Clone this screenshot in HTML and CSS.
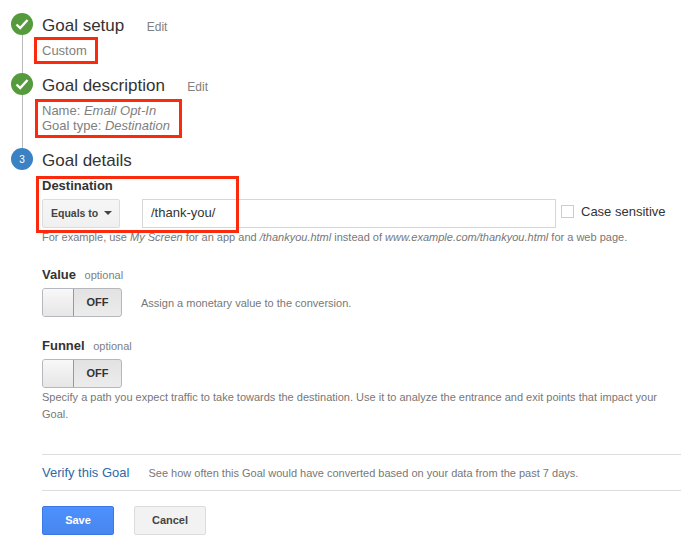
FILE: index.html
```html
<!DOCTYPE html>
<html lang="en">
<head>
<meta charset="UTF-8" />
<title>Goal details</title>
<link rel="stylesheet" href="styles.css">
</head>
<body>
<div class="page">
  <div class="step step-done step-one">
    <div class="marker">
      <div class="circle done">
        <svg width="14" height="12" viewBox="0 0 14 12"><path d="M1.5 6.5 L5.2 10 L12.5 2" fill="none" stroke="#fff" stroke-width="2.4"/></svg>
      </div>
      <div class="line"></div>
    </div>
    <div class="body">
      <div class="head"><h2>Goal setup</h2><a class="edit">Edit</a></div>
      <div class="summary">Custom</div>
    </div>
  </div>

  <div class="step step-done step-two">
    <div class="marker">
      <div class="circle done">
        <svg width="14" height="12" viewBox="0 0 14 12"><path d="M1.5 6.5 L5.2 10 L12.5 2" fill="none" stroke="#fff" stroke-width="2.4"/></svg>
      </div>
      <div class="line"></div>
    </div>
    <div class="body">
      <div class="head"><h2>Goal description</h2><a class="edit">Edit</a></div>
      <div class="summary">Name: <em>Email Opt-In</em><br>Goal type: <em>Destination</em></div>
    </div>
  </div>

  <div class="step">
    <div class="marker">
      <div class="circle current">3</div>
    </div>
    <div class="body details">
      <div class="head"><h2>Goal details</h2></div>

      <div class="label dest-label">Destination</div>
      <div class="dest-row">
        <div class="select">Equals to <span class="caret"></span></div>
        <div class="input">/thank-you/</div>
        <div class="check"></div>
        <div class="check-label">Case sensitive</div>
      </div>
      <p class="help">For example, use <em>My Screen</em> for an app and <em>/thankyou.html</em> instead of <em>www.example.com/thankyou.html</em> for a web page.</p>

      <div class="label value-label">Value <span class="optional">optional</span></div>
      <div class="toggle-row">
        <div class="toggle"><div class="knob"></div><div class="off">OFF</div></div>
        <div class="help-side">Assign a monetary value to the conversion.</div>
      </div>

      <div class="label funnel-label">Funnel <span class="optional">optional</span></div>
      <div class="toggle-row">
        <div class="toggle"><div class="knob"></div><div class="off">OFF</div></div>
      </div>
      <p class="help funnel-help">Specify a path you expect traffic to take towards the destination. Use it to analyze the entrance and exit points that impact your Goal.</p>

      <div class="verify">
        <a class="verify-link">Verify this Goal</a>
        <span class="verify-text">See how often this Goal would have converted based on your data from the past 7 days.</span>
      </div>

      <div class="buttons">
        <button class="btn save">Save</button>
        <button class="btn cancel">Cancel</button>
      </div>
    </div>
  </div>

  <!-- red annotations drawn over the screenshot -->
  <div class="mark mark-one"></div>
  <div class="mark mark-two"></div>
  <div class="mark mark-three"></div>
</div>
</body>
</html>
```

FILE: styles.css
```css
html, body {
  margin: 0;
  padding: 0;
  background: #fff;
}
body {
  font-family: "Liberation Sans", Arial, sans-serif;
  color: #333;
  overflow: hidden;
}
.page {
  position: relative;
  width: 685px;
  height: 541px;
  padding: 13px 4px 0 11px;
  box-sizing: border-box;
}
.step {
  display: flex;
}
.step-one {
  height: 60px;
}
.step-two {
  height: 75px;
}
.marker {
  width: 22px;
  margin-right: 9px;
  display: flex;
  flex-direction: column;
  align-items: center;
  flex-shrink: 0;
}
.circle {
  width: 22px;
  height: 22px;
  border-radius: 50%;
  display: flex;
  align-items: center;
  justify-content: center;
  flex-shrink: 0;
  color: #fff;
  font-size: 10px;
}
.done {
  background: #559a3c;
}
.current {
  background: #3a82c4;
}
.line {
  width: 1px;
  flex: 1;
  background: #bbb;
}
.body {
  flex: 1;
  min-width: 0;
}
.head {
  display: flex;
  align-items: baseline;
  height: 25px;
}
h2 {
  margin: 0;
  font-size: 17px;
  font-weight: normal;
  line-height: 25px;
  color: #333;
}
.edit {
  font-size: 12px;
  color: #808080;
  margin-left: 22.5px;
}
.summary {
  font-size: 13px;
  line-height: 15px;
  color: #808080;
  margin-top: 5px;
}
.label {
  font-size: 13px;
  font-weight: bold;
  color: #333;
  line-height: 15px;
}
.dest-label {
  margin-top: 5px;
}
.dest-row {
  display: flex;
  align-items: flex-start;
  margin-top: 6px;
  height: 29px;
}
.select {
  width: 78px;
  height: 29px;
  box-sizing: border-box;
  border: 1px solid #dcdcdc;
  border-radius: 2px;
  background: linear-gradient(#f6f6f6, #f0f0f0);
  font-size: 10.5px;
  font-weight: bold;
  color: #444;
  display: flex;
  align-items: center;
  padding: 0 0 2px 8px;
  gap: 6px;
}
.caret {
  width: 0;
  height: 0;
  border-left: 4px solid transparent;
  border-right: 4px solid transparent;
  border-top: 4px solid #444;
}
.input {
  width: 414px;
  height: 29px;
  box-sizing: border-box;
  margin-left: 22px;
  border: 1px solid #d6d6d6;
  font-size: 13px;
  line-height: 26px;
  padding-left: 8px;
  color: #333;
}
.check {
  width: 13px;
  height: 13px;
  box-sizing: border-box;
  border: 1px solid #ccc;
  margin: 6px 0 0 5px;
}
.check-label {
  font-size: 13px;
  line-height: 15px;
  color: #333;
  margin: 5px 0 0 7px;
}
.help {
  margin: 1px 0 0;
  font-size: 11px;
  line-height: 17px;
  color: #777;
}
.value-label {
  margin-top: 21px;
}
.funnel-label {
  margin-top: 21px;
}
.optional {
  font-size: 11px;
  font-weight: normal;
  color: #808080;
  margin-left: 5px;
}
.toggle-row {
  display: flex;
  align-items: center;
  margin-top: 5px;
}
.toggle {
  width: 80px;
  height: 29px;
  box-sizing: border-box;
  border: 1px solid #b4b8bc;
  border-radius: 3px;
  display: flex;
  background: linear-gradient(#e2e2e2, #ececec);
  overflow: hidden;
}
.knob {
  width: 30px;
  border-right: 1px solid #999;
  background: linear-gradient(#f8f8f8, #e6e6e6);
}
.off {
  flex: 1;
  text-align: center;
  font-size: 11px;
  font-weight: bold;
  line-height: 26px;
  color: #333;
}
.help-side {
  font-size: 11px;
  color: #777;
  margin-left: 19px;
}
.funnel-help {
  margin-top: 0;
  padding-top: 1px;
}
.verify {
  margin-top: 31px;
  height: 35px;
  border-top: 1px solid #ddd;
  border-bottom: 1px solid #ddd;
  display: flex;
  align-items: center;
}
.verify-link {
  font-size: 13px;
  color: #2a6aa8;
}
.verify-text {
  font-size: 11px;
  color: #777;
  margin-left: 19px;
}
.buttons {
  display: flex;
  gap: 20px;
  margin-top: 15px;
}
.btn {
  width: 72px;
  height: 29px;
  border-radius: 2px;
  font-family: inherit;
  font-size: 11px;
  font-weight: bold;
  padding: 0 0 2px;
}
.save {
  background: linear-gradient(#4d90fe, #4787ed);
  border: 1px solid #3b78e7;
  color: #fff;
}
.cancel {
  background: #f2f2f2;
  border: 1px solid #dcdcdc;
  color: #444;
}
.mark {
  position: absolute;
  box-sizing: border-box;
  border: 3px solid #fb2a0c;
}
.mark-one {
  left: 34px;
  top: 37px;
  width: 64px;
  height: 27px;
}
.mark-two {
  left: 35px;
  top: 99px;
  width: 147px;
  height: 39px;
}
.mark-three {
  left: 36px;
  top: 176px;
  width: 203px;
  height: 57px;
}
```
